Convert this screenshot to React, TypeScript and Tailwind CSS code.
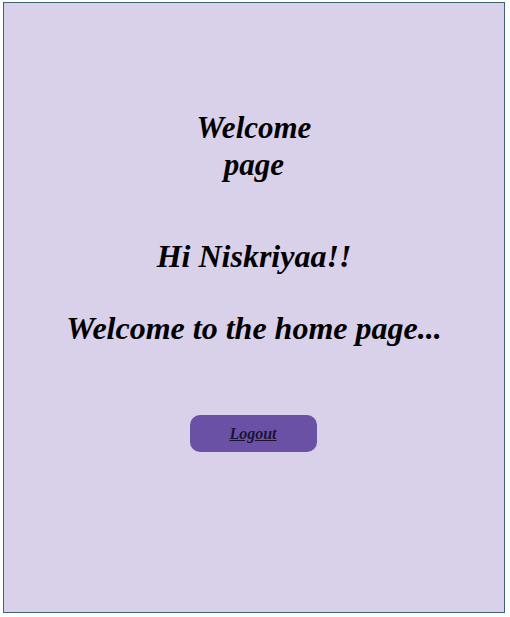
export default function App() {
  return (
    <div className="min-h-screen bg-white pl-[3px] pt-[2px] font-['Liberation_Serif','Times_New_Roman',serif] text-black">
      <div className="flex h-[611px] w-[502px] flex-col items-center border border-[#3f6079] bg-[#d9d0e9]">
        <h2 className="mt-[106px] w-[140px] text-center text-[31px] leading-[37px] font-bold italic">
          Welcome page
        </h2>

        <h1 className="mt-[55px] text-center text-[32px] leading-[37px] font-bold italic">
          Hi Niskriyaa!!
        </h1>
        <h1 className="mt-[35px] text-center text-[32px] leading-[37px] font-bold italic">
          Welcome to the home page...
        </h1>

        <button className="mr-[2px] mt-[68px] flex h-[37px] w-[127px] items-center justify-center rounded-[10px] bg-[#6a51a6]">
          <span className="text-[16px] font-bold italic text-[#1a1433] underline">Logout</span>
        </button>
      </div>
    </div>
  );
}
